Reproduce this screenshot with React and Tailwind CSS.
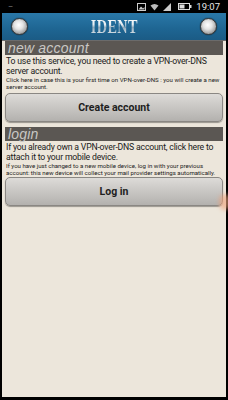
import React from 'react';

/* metallic knob on each side of the title bar */
function Knob() {
  return (
    <div className="w-[17px] h-[17px] rounded-full border border-[#3a3a3a] bg-[radial-gradient(circle_at_45%_40%,#ffffff_0%,#e4e4e4_35%,#9a9a9a_75%,#5c5c5c_100%)] shadow-[0_0_1px_#000]" />
  );
}

function SectionBar({ label }) {
  return (
    <div className="h-[14px] bg-[#5b5753] flex items-center px-[3px]">
      <span
        className="italic text-[14px] leading-none text-[#c9c7c4] tracking-[0.2px]"
        style={{ fontFamily: '"Liberation Sans", Arial, sans-serif' }}
      >
        {label}
      </span>
    </div>
  );
}

function BigButton({ label, className = '' }) {
  return (
    <button
      className={`w-full h-[29px] shrink-0 rounded-[5px] border border-[#8a8783] bg-[linear-gradient(#dddbd8,#c6c4c1_55%,#b3b1ae)] shadow-[0_1px_1px_rgba(0,0,0,0.35)] text-[10.5px] font-bold text-[#1e1e1e] ${className}`}
    >
      {label}
    </button>
  );
}

export default function App() {
  return (
    <div
      className="w-[228px] h-[400px] bg-black flex flex-col overflow-hidden relative"
      style={{ fontFamily: 'Roboto, "Liberation Sans", Arial, sans-serif' }}
    >
      {/* status bar */}
      <div className="h-[13px] shrink-0 flex items-center justify-between px-[8px] text-white">
        <span className="text-[8px] leading-none text-[#888]">–</span>
        <div className="flex items-center gap-[4px]">
          <svg width="9" height="8" viewBox="0 0 9 8">
            <rect x="0.5" y="0.5" width="8" height="7" fill="none" stroke="#ccc" />
            <path d="M1.5 6.5 L4 3.5 L6 5.5 L7.5 4 V6.5 Z" fill="#ccc" />
          </svg>
          <svg width="9" height="8" viewBox="0 0 9 8">
            <path d="M0.5 2.5 Q4.5 -0.5 8.5 2.5 L4.5 7.5 Z" fill="#bbb" />
          </svg>
          <svg width="8" height="8" viewBox="0 0 8 8">
            <path d="M0 8 L8 0 V8 Z" fill="#ccc" />
          </svg>
          <svg width="14" height="7" viewBox="0 0 14 7" className="ml-[3px]">
            <rect x="0.5" y="0.5" width="11" height="6" fill="none" stroke="#ddd" />
            <rect x="1.5" y="1.5" width="5" height="4" fill="#ddd" />
            <rect x="12" y="2" width="1.5" height="3" fill="#ddd" />
          </svg>
          <span className="text-[9.5px] leading-none text-[#e8e8e8]">19:07</span>
        </div>
      </div>

      {/* frame */}
      <div className="flex-1 mx-[2px] mb-[3px] flex flex-col bg-[#ece6db]">
        {/* title bar */}
        <div className="h-[28px] shrink-0 bg-[linear-gradient(#2a78a8,#1e6592_60%,#1b5b85)] flex items-center justify-between px-[9px] border-b border-[#6b6b6b]">
          <Knob />
          <span
            className="text-[19px] font-bold leading-none scale-x-75 text-transparent bg-clip-text bg-[linear-gradient(#ffffff_0%,#e6edf2_40%,#93abbc_55%,#eef3f6_100%)] tracking-[0.5px]"
            style={{ fontFamily: '"Liberation Serif", "Times New Roman", serif' }}
          >
            IDENT
          </span>
          <Knob />
        </div>

        {/* content */}
        <div className="flex flex-col px-[3px] text-[#1a1a1a] whitespace-nowrap">
          <SectionBar label="new account" />
          <p className="text-[8.7px] leading-[10px] mt-[1px] px-[1px] tracking-[-0.2px]">
            To use this service, you need to create a VPN-over-DNS
            <br />
            server account.
          </p>
          <p className="text-[6.1px] leading-[6.5px] mt-[1px] px-[1px]">
            Click here in case this is your first time on VPN-over-DNS : you will create a new
            <br />
            server account.
          </p>
          <BigButton label="Create account" className="mt-[3px]" />

          <div className="mt-[5px]">
            <SectionBar label="login" />
          </div>
          <p className="text-[8.7px] leading-[10px] mt-[1px] px-[1px] tracking-[-0.2px]">
            If you already own a VPN-over-DNS account, click here to
            <br />
            attach it to your mobile device.
          </p>
          <p className="text-[6.1px] leading-[6.5px] mt-[1px] px-[1px]">
            If you have just changed to a new mobile device, log in with your previous
            <br />
            account: this new device will collect your mail provider settings automatically.
          </p>
          <BigButton label="Log in" className="mt-[1px]" />
        </div>
      </div>

      {/* touch ripple at the right edge */}
      <div className="absolute left-[219px] top-[194px] w-[12px] h-[16px] rounded-full bg-[#f0a27a] opacity-60 blur-[2px]" />
    </div>
  );
}
